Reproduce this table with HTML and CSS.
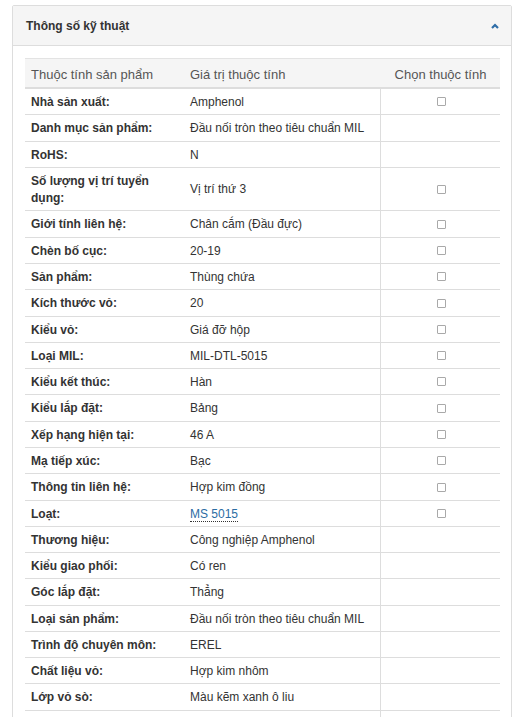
FILE: index.html
```html
<!DOCTYPE html>
<html lang="vi">
<head>
<meta charset="utf-8">
<title>Thông số kỹ thuật</title>
<link rel="stylesheet" href="styles.css">
</head>
<body>
<div class="page">
  <section class="panel">
    <header class="panel-head">
      <h2 class="panel-title">Thông số kỹ thuật</h2>
      <svg class="chev" width="8" height="6" viewBox="0 0 8 6" aria-hidden="true"><path d="M1 5 L4 2 L7 5" fill="none" stroke="#2f6ea8" stroke-width="2.2" stroke-linejoin="miter" stroke-linecap="butt"/></svg>
    </header>
    <div class="panel-body">
      <table class="spec">
        <colgroup><col class="c1"><col class="c2"><col class="c3"></colgroup>
        <thead>
          <tr><th>Thuộc tính sản phẩm</th><th>Giá trị thuộc tính</th><th class="center">Chọn thuộc tính</th></tr>
        </thead>
        <tbody>
          <tr><td class="lbl">Nhà sản xuất:</td><td class="val">Amphenol</td><td class="chk"><span class="box"></span></td></tr>
          <tr><td class="lbl">Danh mục sản phẩm:</td><td class="val">Đầu nối tròn theo tiêu chuẩn MIL</td><td class="chk"></td></tr>
          <tr><td class="lbl">RoHS:</td><td class="val">N</td><td class="chk"></td></tr>
          <tr><td class="lbl">Số lượng vị trí tuyển dụng:</td><td class="val">Vị trí thứ 3</td><td class="chk"><span class="box"></span></td></tr>
          <tr><td class="lbl">Giới tính liên hệ:</td><td class="val">Chân cắm (Đầu đực)</td><td class="chk"><span class="box"></span></td></tr>
          <tr><td class="lbl">Chèn bố cục:</td><td class="val">20-19</td><td class="chk"><span class="box"></span></td></tr>
          <tr><td class="lbl">Sản phẩm:</td><td class="val">Thùng chứa</td><td class="chk"><span class="box"></span></td></tr>
          <tr><td class="lbl">Kích thước vỏ:</td><td class="val">20</td><td class="chk"><span class="box"></span></td></tr>
          <tr><td class="lbl">Kiểu vỏ:</td><td class="val">Giá đỡ hộp</td><td class="chk"><span class="box"></span></td></tr>
          <tr><td class="lbl">Loại MIL:</td><td class="val">MIL-DTL-5015</td><td class="chk"><span class="box"></span></td></tr>
          <tr><td class="lbl">Kiểu kết thúc:</td><td class="val">Hàn</td><td class="chk"><span class="box"></span></td></tr>
          <tr><td class="lbl">Kiểu lắp đặt:</td><td class="val">Bảng</td><td class="chk"><span class="box"></span></td></tr>
          <tr><td class="lbl">Xếp hạng hiện tại:</td><td class="val">46 A</td><td class="chk"><span class="box"></span></td></tr>
          <tr><td class="lbl">Mạ tiếp xúc:</td><td class="val">Bạc</td><td class="chk"><span class="box"></span></td></tr>
          <tr><td class="lbl">Thông tin liên hệ:</td><td class="val">Hợp kim đồng</td><td class="chk"><span class="box"></span></td></tr>
          <tr><td class="lbl">Loạt:</td><td class="val"><a class="link" href="#">MS 5015</a></td><td class="chk"><span class="box"></span></td></tr>
          <tr><td class="lbl">Thương hiệu:</td><td class="val">Công nghiệp Amphenol</td><td class="chk"></td></tr>
          <tr><td class="lbl">Kiểu giao phối:</td><td class="val">Có ren</td><td class="chk"></td></tr>
          <tr><td class="lbl">Góc lắp đặt:</td><td class="val">Thẳng</td><td class="chk"></td></tr>
          <tr><td class="lbl">Loại sản phẩm:</td><td class="val">Đầu nối tròn theo tiêu chuẩn MIL</td><td class="chk"></td></tr>
          <tr><td class="lbl">Trình độ chuyên môn:</td><td class="val">EREL</td><td class="chk"></td></tr>
          <tr><td class="lbl">Chất liệu vỏ:</td><td class="val">Hợp kim nhôm</td><td class="chk"></td></tr>
          <tr><td class="lbl">Lớp vỏ sò:</td><td class="val">Màu kẽm xanh ô liu</td><td class="chk"></td></tr>
          <tr><td class="lbl">&nbsp;</td><td class="val">&nbsp;</td><td class="chk"></td></tr>
        </tbody>
      </table>
    </div>
  </section>
</div>
</body>
</html>
```

FILE: styles.css
```css
html, body {
  margin: 0;
  padding: 0;
  background: #fff;
}
body {
  font-family: "Liberation Sans", Arial, sans-serif;
  color: #333;
}
.page {
  padding: 5px 11px 0 12px;
}
.panel {
  border: 1px solid #dddddd;
  border-radius: 2px;
  background: #fff;
}
.panel-head {
  display: flex;
  align-items: center;
  justify-content: space-between;
  background: #f5f5f5;
  border-bottom: 1px solid #dddddd;
  padding: 12px 13px 10px 13px;
}
.panel-title {
  margin: 0;
  font-size: 12px;
  font-weight: bold;
  line-height: 17px;
  color: #333;
}
.chev {
  display: block;
  position: relative;
  top: -1px;
  left: 1px;
}
.panel-body {
  padding: 12px 11px 0 12px;
}
.spec {
  width: 475px;
  table-layout: fixed;
  border-collapse: separate;
  border-spacing: 0;
}
.c1 { width: 159px; }
.c2 { width: 197px; }
.c3 { width: 119px; }
.spec th {
  background: #f5f5f5;
  border-top: 1px solid #e3e3e3;
  border-bottom: 2px solid #dddddd;
  font-size: 13px;
  font-weight: normal;
  color: #555;
  text-align: left;
  line-height: 17px;
  padding: 7px 6px 4px 6px;
}
.spec th.center {
  text-align: center;
}
.spec td {
  border-bottom: 1px solid #dddddd;
  font-size: 12px;
  line-height: 17.28px;
  padding: 5px 6px 3px 6px;
  vertical-align: middle;
}
.spec td.lbl {
  font-weight: bold;
  color: #333;
}
.spec td.val {
  border-right: 1px solid #dddddd;
  color: #333;
}
.spec td.chk {
  text-align: center;
}
.box {
  display: inline-block;
  width: 7px;
  height: 7px;
  border: 1px solid #a9a9a9;
  border-radius: 1px;
  vertical-align: middle;
  position: relative;
  top: -1px;
  left: 1px;
}
.link {
  color: #2b6ca3;
  text-decoration: none;
  border-bottom: 1px dotted #333;
}
```
